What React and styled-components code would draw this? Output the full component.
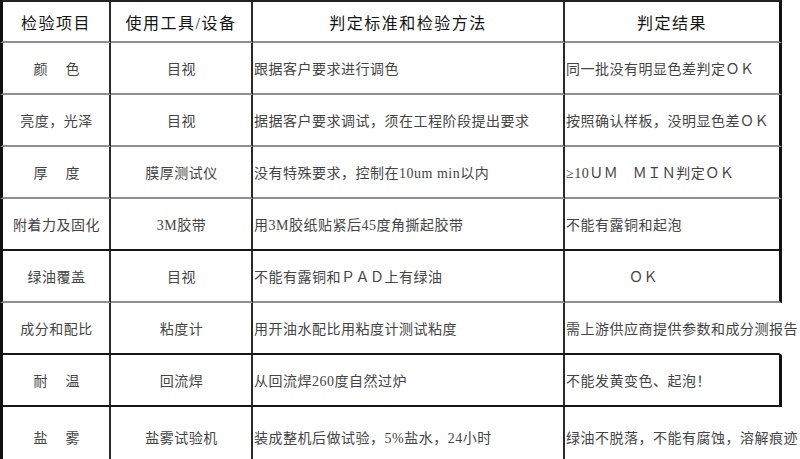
import styled, { createGlobalStyle, css } from 'styled-components';

const GlobalStyle = createGlobalStyle`
    * {
        box-sizing: border-box;
    }
    body {
        margin: 0;
        background: #fff;
        overflow: hidden;
        font-family: "Liberation Serif", "Noto Sans CJK SC", serif;
    }
`;

const Sheet = styled.table`
    width: 782px;
    table-layout: fixed;
    border-collapse: separate;
    border-spacing: 0;
`;

const Col = styled.col`
    width: ${(p) => p.$w}px;
`;

const Row = styled.tr`
    td {
        height: 52px;
        border-bottom: 2px solid ${(p) => (p.$dark ? '#151515' : '#8f8f8f')};
    }
    ${(p) => p.$last && css`
        td {
            height: 60px;
            border-bottom: none;
        }
    `}
`;

const edges = css`
    border-right: 2px solid #2a2a2a;
    &:first-child {
        border-left: 3px solid #111;
    }
    &:last-child {
        border-right: ${(p) => (p.$open ? '3px solid transparent' : '3px solid #111')};
    }
`;

const HeadCell = styled.th`
    ${edges}
    height: 43px;
    border-top: 2px solid #222;
    border-bottom: 2px solid #8f8f8f;
    font-size: 16px;
    font-weight: normal;
    letter-spacing: 1.5px;
    color: #141414;
    text-align: center;
    vertical-align: middle;
    padding: 0;
`;

const Cell = styled.td`
    ${edges}
    font-size: 14px;
    letter-spacing: 0.5px;
    color: #444;
    vertical-align: middle;
    white-space: nowrap;
    overflow: visible;
    text-align: ${(p) => (p.$center ? 'center' : 'left')};
    padding: 0 0 0 ${(p) => p.$indent ?? 1}px;
`;

const Spaced = styled.span`
    letter-spacing: ${(p) => p.$gap}px;
    margin-right: -${(p) => p.$gap}px;
`;

const rows = [
    { item: '颜色', spread: true, tool: '目视', method: '跟据客户要求进行调色', result: '同一批没有明显色差判定ＯＫ' },
    { item: '亮度，光泽', tool: '目视', method: '据据客户要求调试，须在工程阶段提出要求', result: '按照确认样板，没明显色差ＯＫ' },
    { item: '厚度', spread: true, tool: '膜厚测试仪', method: '没有特殊要求，控制在10um min以内', result: '≥10ＵＭ　ＭＩＮ判定ＯＫ' },
    { item: '附着力及固化', tool: '3M胶带', method: '用3M胶纸贴紧后45度角撕起胶带', result: '不能有露铜和起泡', dark: true },
    { item: '绿油覆盖', tool: '目视', method: '不能有露铜和ＰＡＤ上有绿油', result: 'ＯＫ', indent: 64 },
    { item: '成分和配比', tool: '粘度计', method: '用开油水配比用粘度计测试粘度', result: '需上游供应商提供参数和成分测报告', open: true, dark: true },
    { item: '耐温', spread: true, tool: '回流焊', method: '从回流焊260度自然过炉', result: '不能发黄变色、起泡！', dark: true },
    { item: '盐雾', spread: true, tool: '盐雾试验机', method: '装成整机后做试验，5%盐水，24小时', result: '绿油不脱落，不能有腐蚀，溶解痕迹', open: true, last: true },
];

const App = () => {
    return (
        <>
            <GlobalStyle />
            <Sheet>
                <colgroup>
                    <Col $w={111} />
                    <Col $w={142} />
                    <Col $w={312} />
                    <Col $w={217} />
                </colgroup>
                <thead>
                    <tr>
                        <HeadCell>检验项目</HeadCell>
                        <HeadCell>使用工具/设备</HeadCell>
                        <HeadCell>判定标准和检验方法</HeadCell>
                        <HeadCell>判定结果</HeadCell>
                    </tr>
                </thead>
                <tbody>
                    {rows.map((r) => (
                        <Row key={r.item} $dark={r.dark} $last={r.last}>
                            <Cell $center>
                                {r.spread ? <Spaced $gap={18}>{r.item}</Spaced> : r.item}
                            </Cell>
                            <Cell $center>{r.tool}</Cell>
                            <Cell>{r.method}</Cell>
                            <Cell $open={r.open} $indent={r.indent}>{r.result}</Cell>
                        </Row>
                    ))}
                </tbody>
            </Sheet>
        </>
    );
};

export default App;
